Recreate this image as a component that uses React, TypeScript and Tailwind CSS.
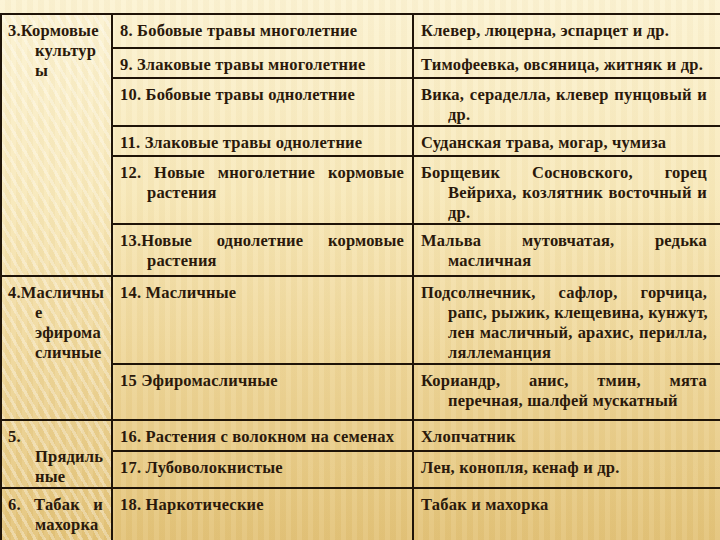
const ink = "text-[#2a190b]";

type Row = {
  h: string;
  lead?: { lines: string[]; span: number };
  mid: string[];
  right: string[];
};

const rows: Row[] = [
  {
    h: "h-[34px]",
    lead: { lines: ["3.Кормовые", "культур", "ы"], span: 6 },
    mid: ["8. Бобовые травы многолетние"],
    right: ["Клевер, люцерна, эспарцет и др."],
  },
  {
    h: "h-[30px]",
    mid: ["9. Злаковые травы многолетние"],
    right: ["Тимофеевка, овсяница, житняк и др."],
  },
  {
    h: "h-[48px]",
    mid: ["10. Бобовые травы однолетние"],
    right: ["Вика, сераделла, клевер пунцовый и", "др."],
  },
  {
    h: "h-[30px]",
    mid: ["11. Злаковые травы однолетние"],
    right: ["Суданская трава, могар, чумиза"],
  },
  {
    h: "h-[68px]",
    mid: ["12. Новые многолетние кормовые", "растения"],
    right: ["Борщевик Сосновского, горец", "Вейриха, козлятник восточный и", "др."],
  },
  {
    h: "h-[52px]",
    mid: ["13.Новые однолетние кормовые", "растения"],
    right: ["Мальва мутовчатая, редька", "масличная"],
  },
  {
    h: "h-[88px]",
    lead: { lines: ["4.Масличны", "е", "эфирома", "сличные"], span: 2 },
    mid: ["14. Масличные"],
    right: [
      "Подсолнечник, сафлор, горчица,",
      "рапс, рыжик, клещевина, кунжут,",
      "лен масличный, арахис, перилла,",
      "ляллеманция",
    ],
  },
  {
    h: "h-[56px]",
    mid: ["15 Эфиромасличные"],
    right: ["Кориандр, анис, тмин, мята", "перечная, шалфей мускатный"],
  },
  {
    h: "h-[31px]",
    lead: { lines: ["5.", "Прядиль", "ные"], span: 2 },
    mid: ["16. Растения с волокном на семенах"],
    right: ["Хлопчатник"],
  },
  {
    h: "h-[36px]",
    mid: ["17. Лубоволокнистые"],
    right: ["Лен, конопля, кенаф и др."],
  },
  {
    h: "h-[62px]",
    lead: { lines: ["6. Табак и", "махорка"], span: 1 },
    mid: ["18. Наркотические"],
    right: ["Табак и махорка"],
  },
];

function Lines({ lines }: { lines: string[] }) {
  return (
    <>
      {lines.map((line, i) => (
        <div
          key={i}
          className={
            "whitespace-nowrap " +
            (i > 0 ? "pl-[27px] " : "") +
            (i < lines.length - 1 ? "text-justify [text-align-last:justify]" : "text-left")
          }
        >
          {line}
        </div>
      ))}
    </>
  );
}

export default function App() {
  return (
    <div className="w-[720px] h-[540px] overflow-hidden pt-[13px] [background-image:repeating-linear-gradient(90deg,rgba(255,255,255,0.07)_0_5px,rgba(120,80,0,0.025)_5px_11px),linear-gradient(180deg,#fcf3d3_0%,#f8e9ba_35%,#efd79a_65%,#e3c379_100%)]">
      <table
        className={`w-[726px] table-fixed border-collapse font-['Liberation_Serif','Times_New_Roman',serif] text-[16.5px] tracking-[0.2px] font-bold leading-[20px] ${ink}`}
      >
        <colgroup>
          <col className="w-[111px]" />
          <col className="w-[301px]" />
          <col />
        </colgroup>
        <tbody>
          {rows.map((r, i) => (
            <tr key={i} className={r.h}>
              {r.lead && (
                <td
                  rowSpan={r.lead.span}
                  className="border-2 border-[#1f1408] align-top pt-[6px] pl-[6px] pr-[8px] [background-image:repeating-linear-gradient(60deg,rgba(255,255,255,0.3)_0_3px,rgba(255,255,255,0)_3px_8px)]"
                >
                  <Lines lines={r.lead.lines} />
                </td>
              )}
              <td className="border-2 border-[#1f1408] align-top pt-[6px] pl-[7px] pr-[8px]">
                <Lines lines={r.mid} />
              </td>
              <td className="border-2 border-[#1f1408] align-top pt-[6px] pl-[7px] pr-[17px]">
                <Lines lines={r.right} />
              </td>
            </tr>
          ))}
        </tbody>
      </table>
    </div>
  );
}
